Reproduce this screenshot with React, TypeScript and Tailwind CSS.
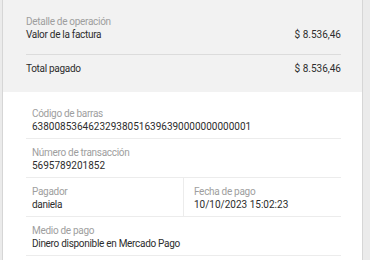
const detail = {
  label: "Detalle de operación",
  concept: "Valor de la factura",
  amount: "$ 8.536,46",
  total: "$ 8.536,46",
};

function Field({
  label,
  value,
  numeric = false,
}: {
  label: string;
  value: string;
  numeric?: boolean;
}) {
  return (
    <div className="px-[6px] pt-[7px] pb-[5px]">
      <p className="text-[10px] leading-[13px] tracking-[-0.3px] text-[#9e9e9e]">{label}</p>
      <p
        className={
          numeric
            ? "text-[10px] leading-[13px] text-[#2d2d2d]"
            : "text-[10px] leading-[13px] tracking-[-0.3px] text-[#2d2d2d]"
        }
      >
        {value}
      </p>
    </div>
  );
}

export default function App() {
  return (
    <div
      className="h-[260px] w-[370px] overflow-hidden bg-[#ebebeb] pl-[2px]"
      style={{ fontFamily: "Roboto, 'Open Sans', sans-serif" }}
    >
      <div className="h-full w-[361px] border-x border-[#d6d6d6] bg-white">
        <section className="h-[92px] bg-[#f2f2f2] pl-[23px] pr-[21px] pt-[15px]">
          <p className="text-[10px] leading-[13px] tracking-[-0.3px] text-[#9e9e9e]">
            {detail.label}
          </p>
          <div className="flex items-center justify-between text-[10px] leading-[13px] text-[#2d2d2d]">
            <span className="tracking-[-0.3px]">{detail.concept}</span>
            <span>{detail.amount}</span>
          </div>
          <div className="mt-[13px] border-t border-[#dcdcdc]" />
          <div className="flex items-center justify-between pt-[7px] text-[10px] leading-[13px] text-[#2d2d2d]">
            <span className="tracking-[-0.3px]">Total pagado</span>
            <span>{detail.total}</span>
          </div>
        </section>

        <section className="pl-[23px] pr-[21px] pt-[8px]">
          <div className="border-b border-[#ececec]">
            <Field label="Código de barras" value="638008536462329380516396390000000000001" numeric />
          </div>
          <div className="border-b border-[#ececec]">
            <Field label="Número de transacción" value="5695789201852" numeric />
          </div>
          <div className="grid grid-cols-[157px_1fr] border-b border-[#ececec]">
            <Field label="Pagador" value="daniela" />
            <div className="border-l border-[#ececec]">
              <div className="pl-[4px]">
                <Field label="Fecha de pago" value="10/10/2023 15:02:23" numeric />
              </div>
            </div>
          </div>
          <div className="border-b border-[#ececec]">
            <Field label="Medio de pago" value="Dinero disponible en Mercado Pago" />
          </div>
        </section>
      </div>
    </div>
  );
}
